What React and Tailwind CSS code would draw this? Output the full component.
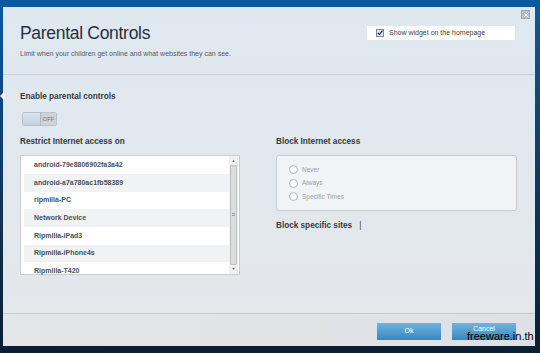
export default function App() {
  const devices = [
    "android-79e8806902fa3a42",
    "android-a7a780ac1fb58389",
    "ripmilla-PC",
    "Network Device",
    "Ripmilla-iPad3",
    "Ripmilla-iPhone4s",
    "Ripmilla-T420",
  ];

  return (
    <div
      className="relative w-[540px] h-[353px] overflow-hidden bg-gradient-to-b from-[#0b5aa0] via-[#0d3a66] to-[#0b1e33] pl-[3px] pt-[7px]"
      style={{ fontFamily: '"Liberation Sans", Arial, sans-serif' }}
    >
      {/* left notch */}
      <div className="absolute left-0 top-[92px] w-0 h-0 border-y-[4px] border-y-transparent border-r-[4px] border-r-white" />

      <div className="w-[532px] h-[339px] flex flex-col bg-gradient-to-b from-[#dfe8f0] to-[#e4e7ea]">
        {/* header */}
        <div className="relative h-[68px] border-b border-[#c9d1d8] px-[17px] pt-[15px]">
          <h1 className="text-[17.5px] leading-[22px] tracking-[-0.3px] text-[#27313d]">Parental Controls</h1>
          <p className="mt-[5px] text-[7px] text-[#555b62]">
            Limit when your children get online and what websites they can see.
          </p>
          <div className="absolute right-[19px] top-[18px] w-[150px] h-[16px] bg-white border border-[#e2e6ea] flex items-center pl-[9px] gap-[5px]">
            <span className="w-[8px] h-[8px] border border-[#7a8a9a] bg-[#dbe6f2] flex items-center justify-center">
              <svg viewBox="0 0 10 10" className="w-[8px] h-[8px]">
                <path d="M1.5 5 L4 7.5 L9 1" fill="none" stroke="#1b2530" strokeWidth="1.8" />
              </svg>
            </span>
            <span className="text-[7px] text-[#444]">Show widget on the homepage</span>
          </div>
          <div className="absolute right-[5px] top-[3px] w-[9px] h-[9px] bg-[#b8c0c8] border border-[#a0a8b0] flex items-center justify-center">
            <svg viewBox="0 0 8 8" className="w-[6px] h-[6px]">
              <path d="M1 1 L7 7 M7 1 L1 7" stroke="#fff" strokeWidth="1.3" />
            </svg>
          </div>
        </div>

        {/* body */}
        <div className="flex-1 px-[17px] pt-[16px]">
          <div className="text-[8.2px] font-bold text-[#333a42]">Enable parental controls</div>
          <div className="mt-[9px] ml-[2px] w-[35px] h-[14px] flex border border-[#b9c2ca] rounded-[2px] overflow-hidden">
            <div className="w-[18px] bg-gradient-to-b from-[#dbe6ef] to-[#c2d0dc] border-r border-[#aab6c0]" />
            <div className="flex-1 bg-[#cfd3d7] flex items-center justify-center text-[6px] text-[#777]">OFF</div>
          </div>

          <div className="flex mt-[10px]">
            <div className="w-[220px]">
              <div className="text-[8.2px] font-bold text-[#333a42]">Restrict Internet access on</div>
              <div className="mt-[6px] h-[120px] bg-white border border-[#c8cdd2] flex">
                <div className="flex-1 pl-[3px] pt-[1px]">
                  {devices.map((d, i) => (
                    <div
                      key={d}
                      className={`h-[17.6px] flex items-center pl-[10px] text-[7px] font-bold text-[#4a5058] ${
                        i % 2 === 1 ? "bg-[#f1f2f3]" : ""
                      }`}
                    >
                      {d}
                    </div>
                  ))}
                </div>
                <div className="w-[9px] bg-[#f0f0f0] flex flex-col items-center py-[2px] mr-[1px]">
                  <span className="text-[4px] text-[#666] leading-[6px]">▲</span>
                  <div className="flex-1 w-[7px] my-[1px] bg-[#dcdcdc] border border-[#c0c0c0] rounded-[1px] flex items-center justify-center">
                    <div className="w-[3px] h-[3px] border-y border-[#999]" />
                  </div>
                  <span className="text-[4px] text-[#666] leading-[6px]">▼</span>
                </div>
              </div>
            </div>

            <div className="ml-[36px] w-[241px]">
              <div className="text-[8.2px] font-bold text-[#333a42]">Block Internet access</div>
              <div className="mt-[6px] h-[56px] border border-[#c6ccd2] rounded-[3px] bg-[#f1f4f7] pl-[12px] pt-[9px] flex flex-col gap-[4px]">
                {["Never", "Always", "Specific Times"].map((t) => (
                  <div key={t} className="flex items-center gap-[4px]">
                    <span className="w-[9px] h-[9px] rounded-full border border-[#b0b6bc] bg-white" />
                    <span className="text-[6.5px] text-[#9aa0a6]">{t}</span>
                  </div>
                ))}
              </div>
              <div className="mt-[9px] text-[8.2px] font-bold text-[#333a42]">
                Block specific sites <span className="ml-[5px] font-normal">|</span>
              </div>
            </div>
          </div>
        </div>

        {/* footer */}
        <div className="h-[33px] border-t border-[#c4cbd1] bg-gradient-to-r from-[#e3e7ea] to-[#dde1e5] flex items-start justify-end gap-[11px] pr-[19px] pt-[9px]">
          <button className="w-[64px] h-[17px] bg-gradient-to-b from-[#6db4e0] to-[#3a86bf] text-white text-[7px]">Ok</button>
          <button className="w-[64px] h-[17px] bg-gradient-to-b from-[#6db4e0] to-[#3a86bf] text-white text-[7px] leading-[10px] pb-[6px]">Cancel</button>
        </div>
      </div>

      <div className="absolute left-[467px] top-[330px] text-[11px] text-black leading-[13px]">freeware.in.th</div>
    </div>
  );
}
